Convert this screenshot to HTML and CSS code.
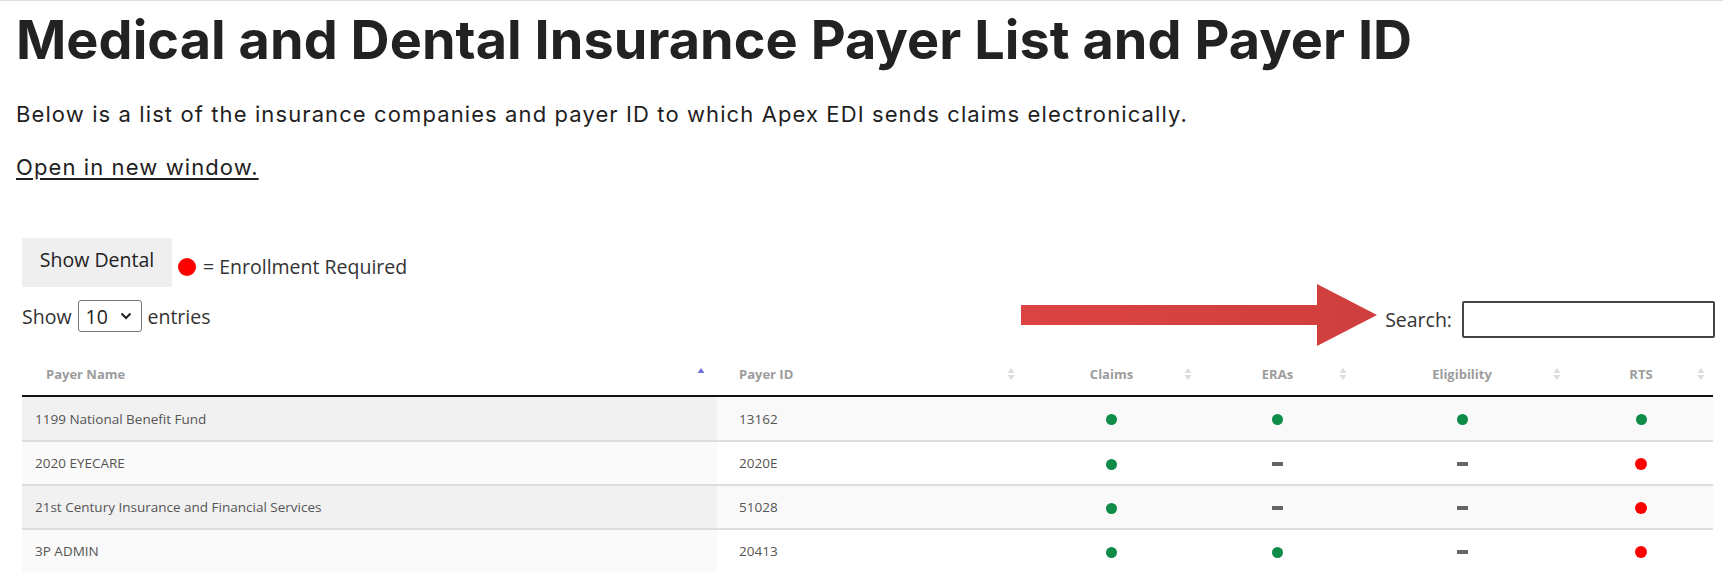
FILE: index.html
```html
<!DOCTYPE html>
<html lang="en">
<head>
<meta charset="utf-8">
<title>Medical and Dental Insurance Payer List and Payer ID</title>
<link rel="stylesheet" href="styles.css">
</head>
<body>
<div class="topline"></div>
<main class="page">
  <h1 class="title">Medical and Dental Insurance Payer List and Payer ID</h1>
  <p class="lead">Below is a list of the insurance companies and payer ID to which Apex EDI sends claims electronically.</p>
  <p class="lead lead-link"><a class="link" href="#">Open in new window.</a></p>

  <section class="dt">
    <div class="legend">
      <button class="btn" type="button">Show Dental</button>
      <span class="legend-dot"></span>
      <span class="legend-text">= Enrollment Required</span>
    </div>

    <div class="controls">
      <div class="length">
        <span>Show</span>
        <span class="select"><span class="select-val">10</span><svg class="chev" width="12" height="8" viewBox="0 0 12 8"><path d="M1.5 1.5 L6 6 L10.5 1.5" fill="none" stroke="#222" stroke-width="2"/></svg></span>
        <span>entries</span>
      </div>
      <div class="search">
        <span>Search:</span>
        <span class="input"></span>
      </div>
    </div>

    <table class="grid">
      <colgroup>
        <col class="c1"><col class="c2"><col class="c3"><col class="c4"><col class="c5"><col class="c6">
      </colgroup>
      <thead>
        <tr>
          <th class="left">Payer Name<span class="sort sort-active"><svg width="8" height="16" viewBox="0 0 8 16"><path d="M4 2 L7.5 7 L0.5 7 Z" fill="#6f6fd8"/></svg></span></th>
          <th class="left">Payer ID<span class="sort"><svg width="8" height="16" viewBox="0 0 8 16"><path d="M4 2 L7.5 7 L0.5 7 Z M4 14 L7.5 9 L0.5 9 Z" fill="#dcdcdc"/></svg></span></th>
          <th>Claims<span class="sort"><svg width="8" height="16" viewBox="0 0 8 16"><path d="M4 2 L7.5 7 L0.5 7 Z M4 14 L7.5 9 L0.5 9 Z" fill="#dcdcdc"/></svg></span></th>
          <th>ERAs<span class="sort"><svg width="8" height="16" viewBox="0 0 8 16"><path d="M4 2 L7.5 7 L0.5 7 Z M4 14 L7.5 9 L0.5 9 Z" fill="#dcdcdc"/></svg></span></th>
          <th>Eligibility<span class="sort"><svg width="8" height="16" viewBox="0 0 8 16"><path d="M4 2 L7.5 7 L0.5 7 Z M4 14 L7.5 9 L0.5 9 Z" fill="#dcdcdc"/></svg></span></th>
          <th>RTS<span class="sort"><svg width="8" height="16" viewBox="0 0 8 16"><path d="M4 2 L7.5 7 L0.5 7 Z M4 14 L7.5 9 L0.5 9 Z" fill="#dcdcdc"/></svg></span></th>
        </tr>
      </thead>
      <tbody>
        <tr class="odd">
          <td class="sorted">1199 National Benefit Fund</td>
          <td>13162</td>
          <td class="mid"><span class="dot g"></span></td>
          <td class="mid"><span class="dot g"></span></td>
          <td class="mid"><span class="dot g"></span></td>
          <td class="mid"><span class="dot g"></span></td>
        </tr>
        <tr class="even">
          <td class="sorted">2020 EYECARE</td>
          <td>2020E</td>
          <td class="mid"><span class="dot g"></span></td>
          <td class="mid"><span class="dash"></span></td>
          <td class="mid"><span class="dash"></span></td>
          <td class="mid"><span class="dot r"></span></td>
        </tr>
        <tr class="odd">
          <td class="sorted">21st Century Insurance and Financial Services</td>
          <td>51028</td>
          <td class="mid"><span class="dot g"></span></td>
          <td class="mid"><span class="dash"></span></td>
          <td class="mid"><span class="dash"></span></td>
          <td class="mid"><span class="dot r"></span></td>
        </tr>
        <tr class="even">
          <td class="sorted">3P ADMIN</td>
          <td>20413</td>
          <td class="mid"><span class="dot g"></span></td>
          <td class="mid"><span class="dot g"></span></td>
          <td class="mid"><span class="dash"></span></td>
          <td class="mid"><span class="dot r"></span></td>
        </tr>
      </tbody>
    </table>
  </section>

  <svg class="arrow" width="360" height="64" viewBox="0 0 360 64">
    <defs>
      <linearGradient id="ag" x1="0" y1="0" x2="1" y2="0">
        <stop offset="0" stop-color="#dc4343"/>
        <stop offset="0.5" stop-color="#d54141"/>
        <stop offset="1" stop-color="#cf3e3e"/>
      </linearGradient>
    </defs>
    <path d="M0 21 L296 21 L296 0 L356 31 L296 62 L296 41 L0 41 Z" fill="url(#ag)"/>
  </svg>
</main>
</body>
</html>
```
FILE: styles.css
```css
* { box-sizing: border-box; }

body {
  margin: 0;
  background: #ffffff;
  color: #222222;
  font-family: Inter, "Liberation Sans", sans-serif;
}

.topline {
  height: 1px;
  background: #dddddd;
}

.page {
  position: relative;
  padding: 0 0 0 16px;
}

.title {
  margin: 7px 0 0;
  font-family: Inter, "Liberation Sans", sans-serif;
  font-weight: 700;
  font-size: 54px;
  line-height: 64px;
  color: #222222;
  letter-spacing: 0.05px;
}

.lead {
  margin: 28px 0 0;
  font-size: 22px;
  line-height: 28px;
  letter-spacing: 1.1px;
  color: #1f1f1f;
}

.lead-link {
  margin-top: 25px;
}

.link {
  color: #1f1f1f;
  text-decoration: underline;
  text-underline-offset: 3px;
}

.dt {
  margin: 57px 0 0 6px;
  width: 1691px;
  font-family: "Open Sans", "Noto Sans", sans-serif;
  color: #333333;
}

.legend {
  display: flex;
  align-items: center;
}

.btn {
  width: 150px;
  height: 49px;
  border: 0;
  border-radius: 0;
  background: #efefef;
  font-family: "Open Sans", "Noto Sans", sans-serif;
  font-size: 19.5px;
  color: #222222;
  padding: 0 0 6px;
}

.legend-dot {
  width: 18px;
  height: 18px;
  border-radius: 50%;
  background: #ff0000;
  margin: 8px 7px 0 6px;
}

.legend-text {
  font-size: 19.5px;
  margin-top: 7px;
  color: #333333;
}

.controls {
  margin-top: 13px;
  display: flex;
  justify-content: space-between;
  align-items: flex-start;
  height: 52px;
}

.length {
  display: flex;
  align-items: center;
  gap: 6px;
  font-size: 19.5px;
  color: #333333;
}

.select {
  display: flex;
  align-items: center;
  justify-content: space-between;
  width: 64px;
  height: 32px;
  border: 1px solid #767676;
  border-radius: 3px;
  padding: 0 9px 0 7px;
  color: #222222;
}

.search {
  display: flex;
  align-items: center;
  gap: 10px;
  font-size: 19.5px;
  margin-right: -2px;
  margin-top: 1px;
}

.input {
  width: 253px;
  height: 37px;
  border: 2px solid #444444;
  border-radius: 2px;
  background: #ffffff;
}

.grid {
  width: 1691px;
  border-collapse: separate;
  border-spacing: 0;
  table-layout: fixed;
}

.c1 { width: 695px; }
.c2 { width: 306px; }
.c3 { width: 177px; }
.c4 { width: 155px; }
.c5 { width: 214px; }
.c6 { width: 144px; }

.grid th {
  position: relative;
  height: 45px;
  padding: 0;
  font-size: 13px;
  font-weight: 700;
  color: #9c9c9c;
  text-align: center;
  border-bottom: 2px solid #111111;
}

.grid th.left {
  text-align: left;
  padding-left: 24px;
}

.grid th.left + th.left {
  padding-left: 22px;
}

.sort {
  position: absolute;
  right: 8px;
  top: 14px;
  width: 8px;
  height: 16px;
  display: block;
}

.sort.sort-active {
  right: 12px;
}

.sort svg { display: block; }

.grid td {
  height: 44px;
  padding: 0 10px 0 13px;
  font-size: 13.5px;
  color: #555555;
  border-top: 2px solid #dddddd;
  background: #ffffff;
}

.grid tbody tr:first-child td {
  border-top: 0;
  height: 43px;
}

.grid tr.odd td { background: #f9f9f9; }
.grid tr.odd td.sorted { background: #f1f1f1; }
.grid tr.even td.sorted { background: #fafafa; }

.grid td + td { padding-left: 22px; }

.grid td.mid {
  text-align: center;
  padding: 0;
}

.dot {
  display: inline-block;
  width: 11px;
  height: 11px;
  border-radius: 50%;
  vertical-align: middle;
}

.dot.g { background: #0f8c48; }
.dot.r { background: #ff0000; width: 12px; height: 12px; }

.dash {
  display: inline-block;
  width: 11px;
  height: 4px;
  background: #666666;
  vertical-align: middle;
}

.arrow {
  position: absolute;
  left: 1021px;
  top: 276px;
}
```
